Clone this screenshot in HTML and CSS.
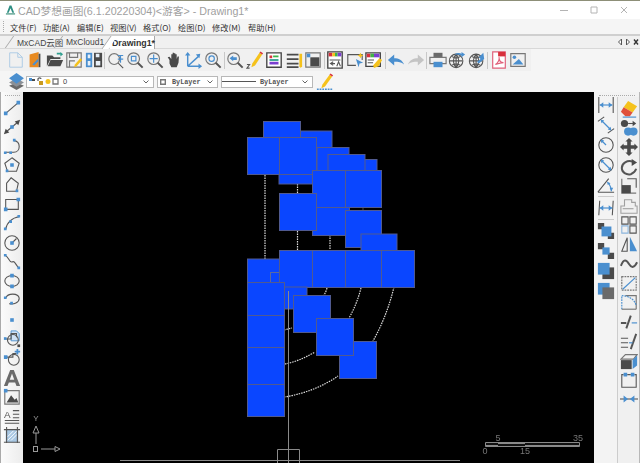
FILE: index.html
```html
<!DOCTYPE html>
<html lang="zh">
<head>
<meta charset="utf-8">
<title>CAD梦想画图</title>
<link rel="stylesheet" href="styles.css">
</head>
<body>
<div class="app">
  <header class="titlebar">
    <svg class="logo" viewBox="0 0 12 12"><path class="logo-a" d="M2 9 L5 1 H7 L10 9 H8 L6 4 L4 9Z"/><path class="logo-b" d="M1 9.5 H11 V11 H1Z"/></svg>
    <span class="title">CAD梦想画图(6.1.20220304)&lt;游客&gt; - Drawing1*</span>
    <div class="winctl">
      <svg class="wc" viewBox="0 0 10 10"><path d="M1 5.5H9"/></svg>
      <svg class="wc" viewBox="0 0 10 10"><path d="M2 2H8V8H2Z"/></svg>
      <svg class="wc" viewBox="0 0 10 10"><path d="M2 2L8 8M8 2L2 8"/></svg>
    </div>
  </header>
  <nav class="menubar">
    <span class="grip-v"></span>
    <span class="mi m1">文件(F)</span><span class="mi m2">功能(A)</span><span class="mi m3">编辑(E)</span><span class="mi m4">视图(V)</span><span class="mi m5">格式(O)</span><span class="mi m6">绘图(D)</span><span class="mi m7">修改(M)</span><span class="mi m8">帮助(H)</span>
  </nav>
  <div class="tabstrip">
    <span class="tab t1">MxCAD云图</span>
    <span class="tab t2">MxCloud1</span>
    <span class="tab t3">Drawing1*</span>
    <div class="tabctl">
      <svg class="tc" viewBox="0 0 6 8"><path class="s2" d="M4.500 1L1.500 4L4.500 7Z"/></svg>
      <svg class="tc" viewBox="0 0 6 8"><path class="s2" d="M1.500 1L4.500 4L1.500 7Z"/></svg>
      <svg class="tc" viewBox="0 0 6 8"><path class="sk" d="M1 1.500L5 6.500M5 1.500L1 6.500"/></svg>
    </div>
  </div>
  <div class="toolrow">
    <div class="toolbar">
      <svg class="ti" viewBox="0 0 20 20"><path class="sl" d="M3 2H12L17 7V18H3Z"/><path class="sl" d="M12 2V7H17"/></svg>
      <svg class="ti" viewBox="0 0 20 20"><path class="or" d="M4 4L14 1V18L4 18Z"/><path class="dk" d="M16 3V18H14V3Z"/><path class="bl" d="M7 15L13 9L14 11L9 16Z"/></svg>
      <svg class="ti" viewBox="0 0 20 20"><path class="dk" d="M1 5H7L9 7H16V9H5L1 17Z"/><path class="dk" d="M5 10H19L16 17H2Z"/><path class="te" d="M12 2H16V1L19 3.500L16 6V4H12Z"/></svg>
      <svg class="ti" viewBox="0 0 20 20"><path class="sg" d="M2 2H18V18H2Z"/><path class="sg" d="M5 2V7H14V2M5 18V11H11"/><path class="ye" d="M11 15L17 8L19 10L13 17L10 18Z"/></svg>
      <svg class="ti" viewBox="0 0 20 20"><path class="bl" d="M1 2H8V18H1Z"/><path class="dk" d="M10 2H19V18H10Z"/><path class="wh" d="M3 4H6V8H3ZM12 11H17V16H12ZM3 11H6V16H3ZM12 3H16V7H12Z"/></svg>
      <i class="sep"></i>
      <svg class="ti" viewBox="0 0 20 20"><circle class="sg" cx="8" cy="9" r="6"/><path class="sd" d="M12.500 13.500L18 19"/><path class="bs" d="M12 5H18M12 9H18M15 5V13"/></svg>
      <svg class="ti" viewBox="0 0 20 20"><circle class="sg" cx="8.500" cy="8.500" r="6.500"/><path class="sd2" d="M13 13L18.500 18.500"/><path class="bs" d="M6 6H11V11H6Z"/></svg>
      <svg class="ti" viewBox="0 0 20 20"><circle class="sg" cx="8.500" cy="8.500" r="6.500"/><path class="sd2" d="M13 13L18.500 18.500"/><path class="bs" d="M8.500 4V13M4 8.500H13"/></svg>
      <svg class="ti" viewBox="0 0 20 20"><path class="dk" d="M5 10L3 7L5 6.500L7 9V3.500H8.500V8V2H10V8V2.500H11.500V8V3.500H13V9L14 6H15.500L15 13L13 18H7L5 14Z"/></svg>
      <svg class="ti" viewBox="0 0 20 20"><path class="bs2" d="M3 17V3M3 17H17M3 17L15 6"/><path class="bl" d="M3 1L6 5H0ZM19 17L15 20V14ZM17 3L16 8L12 4Z"/></svg>
      <svg class="ti" viewBox="0 0 20 20"><circle class="sg" cx="8.500" cy="8.500" r="6.500"/><path class="sd2" d="M13 13L18.500 18.500"/><circle class="bs" cx="8.500" cy="8.500" r="3"/></svg>
      <i class="sep"></i>
      <svg class="ti" viewBox="0 0 20 20"><circle class="sg" cx="8.500" cy="8.500" r="6.500"/><path class="sd2" d="M13 13L18.500 18.500"/><path class="bl" d="M4 8L8 5V7H12V10H8V11.500Z"/></svg>
      <svg class="ti" viewBox="0 0 20 20"><path class="ye" d="M7 14L15 2L18 4L10 16L6 18Z"/><path class="re" d="M15 2L16 0.500L19 2.500L18 4Z"/><path class="sd" d="M1 15H4L1 19H4"/></svg>
      <svg class="ti" viewBox="0 0 20 20"><path class="ws" d="M2 2H18V18H2Z"/><path class="re" d="M5 5H8V8H5Z"/><path class="gr" d="M9 5H15V7H9Z"/><path class="te" d="M5 9H15V11H5Z"/><path class="pu" d="M5 12H15V15H5Z"/></svg>
      <svg class="ti" viewBox="0 0 20 20"><path class="dk" d="M2 3H15V5H2ZM2 8H15V10H2ZM2 13H15V15H2ZM2 17H15V19H2Z"/><path class="ye" d="M16 3H19V17L17.500 19L16 17Z"/></svg>
      <svg class="ti" viewBox="0 0 20 20"><path class="sg" d="M2 2H18V18H2Z"/><path class="dk" d="M7 7H17V17H7Z"/><path class="bl" d="M3 3H7V7H3Z"/></svg>
      <i class="sep"></i>
      <svg class="ti" viewBox="0 0 20 20"><path class="ws" d="M2 1H18V19H2Z"/><path class="re" d="M3 2H7V6H3Z"/><path class="ye" d="M7 2H10V6H7Z"/><path class="gr" d="M10 2H13V6H10Z"/><path class="pu" d="M13 2H17V6H13Z"/><path class="sd" d="M4 10H16M10 14H5M8 12L5 14L8 16M12 17L14 12L16 17"/></svg>
      <svg class="ti" viewBox="0 0 20 20"><path class="sd" d="M11 16H2V4H18V10"/><path class="bl" d="M11 9L19 13L15 14L14 18Z"/><path class="ye" d="M16 2L17 4L19 5L17 6L16 8L15 6L13 5L15 4Z"/></svg>
      <svg class="ti" viewBox="0 0 20 20"><path class="ws" d="M1 2H17V17H1Z"/><path class="re" d="M2 3H6V7H2Z"/><path class="gr" d="M6 3H10V7H6Z"/><path class="pu" d="M10 3H16V7H10Z"/><path class="sd" d="M3 10H10M3 13H9"/><path class="ye" d="M9 16L16 8L19 10L15 17L10 19Z"/></svg>
      <i class="sep"></i>
      <svg class="ti" viewBox="0 0 20 20"><path class="bl" d="M8 4V8C13 8 17 10 19 15C16 12.500 13 12 8 12V16L1 10Z"/></svg>
      <svg class="ti" viewBox="0 0 20 20"><path class="lg" d="M12 4V8C7 8 3 10 1 15C4 12.500 7 12 12 12V16L19 10Z"/></svg>
      <i class="sep"></i>
      <svg class="ti" viewBox="0 0 20 20"><path class="dg" d="M5 2H15V7H5Z"/><path class="sg" d="M1 7H19V14H1Z"/><path class="bl" d="M5 12H15V18H5Z"/></svg>
      <svg class="ti" viewBox="0 0 20 20"><circle class="sd" cx="9" cy="11" r="7.500"/><path class="sd" d="M2 11H16M9 3.500V18.500M4 6C7 8 11 8 14 6M4 16C7 14 11 14 14 16M9 3.500C5 8 5 14 9 18.500M9 3.500C13 8 13 14 9 18.500"/><path class="bl" d="M7 4C10 2 13 2 15 3V1L19 4L15 7V5C12 4 10 4 7 4Z"/></svg>
      <svg class="ti" viewBox="0 0 20 20"><circle class="sd" cx="9" cy="11" r="7.500"/><path class="sd" d="M2 11H16M9 3.500V18.500M4 6C7 8 11 8 14 6M4 16C7 14 11 14 14 16M9 3.500C5 8 5 14 9 18.500M9 3.500C13 8 13 14 9 18.500"/><path class="bl" d="M17 2L18 9L12 14L10 12L14 9L12 7Z"/></svg>
      <i class="sep"></i>
      <svg class="ti" viewBox="0 0 20 20"><path class="pk" d="M3 1H17V19H3Z"/><path class="re" d="M9 1H17V6H9Z"/><path class="pk" d="M6 15C9 13 11 9 10 7C10 11 12 13 15 13C12 13 9 14 6 15Z"/></svg>
      <svg class="ti" viewBox="0 0 20 20"><path class="sg" d="M2 3H18V17H2Z"/><path class="bl" d="M4 15L11 9L16 15Z"/><circle class="bl" cx="6" cy="7" r="2"/></svg>
    </div>
  </div>
  <div class="propbar">
    <svg class="layers" viewBox="0 0 16 16"><path class="dg" d="M8 9L15 12L8 16L1 12Z"/><path class="sla" d="M8 5L15 9L8 13L1 9Z"/><path class="bl" d="M8 0L15 5L8 10L1 5Z"/></svg>
    <div class="combo c-layer">
      <svg class="lic" viewBox="0 0 32 9"><path class="bl" d="M0 1H3V4H0Z"/><path class="dk" d="M3 2H6V4H3Z"/><path class="lock" d="M10 4H14V8H10Z"/><path class="sd" d="M9 4V2C9 0.500 12 0.500 12 2"/><circle class="ye" cx="19" cy="4.500" r="2.500"/><path class="sg" d="M24 2H29V7H24Z"/></svg>
      <span class="zero">0</span>
      <svg class="chev" viewBox="0 0 6 4"><path d="M0.500 0.500L3 3L5.500 0.500"/></svg>
    </div>
    <div class="combo c-color">
      <svg class="csq" viewBox="0 0 5 5"><path class="sg" d="M0.500 0.500H4.500V4.500H0.500Z"/></svg>
      <span class="bylayer">ByLayer</span>
      <svg class="chev" viewBox="0 0 6 4"><path d="M0.500 0.500L3 3L5.500 0.500"/></svg>
    </div>
    <div class="combo c-line">
      <i class="ltline"></i>
      <span class="bylayer">ByLayer</span>
      <svg class="chev" viewBox="0 0 6 4"><path d="M0.500 0.500L3 3L5.500 0.500"/></svg>
    </div>
    <svg class="pencil" viewBox="0 0 20 20"><path class="ye" d="M7 13L15 2L18 4L10 15L6 17Z"/><path class="re" d="M15 2L16 0.500L19 2.500L18 4Z"/><path class="dots" d="M1 18H19"/></svg>
  </div>
  <div class="workspace">
    <aside class="leftbar">
      <i class="grip-h"></i>
      <svg class="vi" viewBox="0 0 20 20"><path class="sd" d="M3 16L17 4"/><path class="bl" d="M1 14H5V18H1ZM15 2H19V6H15Z"/></svg>
      <svg class="vi" viewBox="0 0 20 20"><path class="sd" d="M4 15L16 5"/><path class="dk" d="M1 18L3 12L7 16ZM19 2L17 8L13 4Z"/><path class="bl" d="M8 8H12V12H8Z"/></svg>
      <svg class="vi" viewBox="0 0 20 20"><path class="sd" d="M3 17H12C20 17 20 4 12 4"/><path class="bl" d="M1 16H4V19H1ZM11 2H14V5H11ZM7 16H10V19H7Z"/></svg>
      <svg class="vi" viewBox="0 0 20 20"><path class="sd" d="M10 2L18 8L15 17H5L2 8Z"/><path class="bl" d="M8 8H12V12H8ZM3 15H6V18H3Z"/></svg>
      <svg class="vi" viewBox="0 0 20 20"><path class="sd" d="M9 2L17 8L15 17H4V8Z"/><path class="bl" d="M14 15H17V18H14Z"/></svg>
      <svg class="vi" viewBox="0 0 20 20"><path class="sd" d="M3 5H17V16H3Z"/><path class="bl" d="M1 14H5V18H1ZM15 3H19V7H15Z"/></svg>
      <svg class="vi" viewBox="0 0 20 20"><path class="sd" d="M3 17C4 10 10 4 18 3"/><path class="bl" d="M1 15H4V18H1ZM7 7H10V10H7ZM16 1H19V4H16Z"/></svg>
      <svg class="vi" viewBox="0 0 20 20"><circle class="sd" cx="10" cy="10" r="8"/><path class="sd" d="M10 10L15 5"/><path class="bl" d="M8 8H12V12H8Z"/></svg>
      <svg class="vi" viewBox="0 0 20 20"><path class="sd" d="M3 3C6 4 7 11 10 10C13 8 14 13 17 16"/><path class="bl" d="M1 1H4V4H1ZM16 15H19V18H16Z"/></svg>
      <svg class="vi" viewBox="0 0 20 20"><ellipse class="sd" cx="10" cy="10" rx="8" ry="6"/><path class="bl" d="M8 2H12V6H8ZM8 14H12V18H8Z"/></svg>
      <svg class="vi" viewBox="0 0 20 20"><path class="sd" d="M3 8C5 2 17 2 18 8C18 13 12 15 7 14"/><path class="bl" d="M1 6H4V9H1ZM8 12H11V15H8Z"/></svg>
      <svg class="vi" viewBox="0 0 20 20"><path class="bl" d="M8 8H12V12H8Z"/></svg>
      <svg class="vi" viewBox="0 0 20 20"><path class="wb" d="M9 1H15L18 4V12H9Z"/><circle class="sd" cx="11" cy="11" r="6"/><path class="sd" d="M3 10H9V4H15V8"/><path class="bl" d="M1 8H4V11H1Z"/><path class="dk" d="M16 16L19 16L19 19L16 19Z"/></svg>
      <svg class="vi" viewBox="0 0 20 20"><circle class="sd" cx="12" cy="12" r="6"/><path class="sd" d="M4 9H11V5H15"/><path class="bl" d="M1 7H5V11H1ZM15 0H17V2H19V4H17V6H15V4H13V2H15Z"/></svg>
      <svg class="vi" viewBox="0 0 20 20"><path class="dg" d="M8 1H12L19 19H15L13.500 15H6.500L5 19H1ZM10 5L7.500 12H12.500Z"/></svg>
      <svg class="vi" viewBox="0 0 20 20"><path class="sg" d="M2 3H18V18H2Z"/><path class="dk" d="M4 16L9 8L13 13L15 11L17 16Z"/><path class="bl" d="M1 1H5V5H1Z"/></svg>
      <svg class="vi" viewBox="0 0 20 20"><path class="sd" d="M11 4H18M11 8H18M11 12H18M2 15H18M2 18H18"/><text class="atext" x="1" y="12">A</text></svg>
      <svg class="vi" viewBox="0 0 20 20"><path class="hatch" d="M3 4H17V18H3Z"/><path class="sl2" d="M5 16L16 5M5 12L12 5M9 16L16 9"/><path class="sd" d="M1 4H19M1 18H19M4 1V19M16 1V19"/></svg>
    </aside>
    <main class="canvas">
      <svg class="drawing" viewBox="23 92 571 371">
        <g class="dotted">
          <path d="M265 175V259"/>
          <path d="M297.500 184V193M297.500 231V250"/>
          <path d="M330 235V250"/>
          <path class="dimdot" d="M363 207V210"/>
          <path d="M327 288Q326 292 324 295"/>
          <path d="M361 288Q357 304 349 318"/>
          <path d="M394 287Q387 316 373 341"/>
          <path d="M284 330L292 328"/>
          <path d="M285 364Q300 361 315 352"/>
          <path d="M284 397Q315 392 338 376"/>
        </g>
        <g class="blocks">
          <rect x="295" y="131" width="37" height="37"/>
          <rect x="263.500" y="121.500" width="37" height="37"/>
          <rect x="317" y="147.500" width="32" height="37"/>
          <rect x="340" y="159.500" width="37" height="37"/>
          <rect x="328" y="154.500" width="37" height="37"/>
          <rect x="279" y="147" width="37" height="37"/>
          <rect x="247.500" y="137.500" width="37" height="37"/>
          <rect x="279.500" y="137.500" width="37" height="37"/>
          <rect x="312.500" y="198.500" width="37" height="37"/>
          <rect x="312.500" y="170.500" width="33" height="37"/>
          <rect x="345.500" y="170.500" width="36" height="37"/>
          <rect x="279.500" y="193.500" width="37" height="37"/>
          <rect x="345.500" y="210.500" width="36" height="37"/>
          <rect x="361" y="234" width="36" height="37"/>
          <rect x="247.500" y="259" width="37" height="37"/>
          <rect class="outline" x="270.500" y="272.500" width="9" height="10"/>
          <rect x="279.500" y="250.500" width="33" height="37"/>
          <rect x="312.500" y="250.500" width="33" height="37"/>
          <rect x="345.500" y="250.500" width="36" height="37"/>
          <rect x="381.500" y="250.500" width="33" height="37"/>
          <rect x="270" y="287" width="37" height="22"/>
          <rect x="293.500" y="295.500" width="37" height="37"/>
          <rect x="339.500" y="341.500" width="37" height="37"/>
          <rect x="316.500" y="318.500" width="37" height="37"/>
          <rect x="247.500" y="282.500" width="37" height="33"/>
          <rect x="247.500" y="315.500" width="37" height="32"/>
          <rect x="247.500" y="347.500" width="37" height="37"/>
          <rect x="247.500" y="384.500" width="37" height="32"/>
        </g>
        <g class="axis">
          <path d="M288.500 291V463"/>
          <path d="M277.500 463V449.500H299.500V463"/>
          <path d="M120 460.500H460"/>
        </g>
        <g class="ucs">
          <path d="M36 444V433M41 449H55"/>
          <path d="M36 426L39 433H33ZM60 449L55 446.500V451.500Z"/>
          <rect x="33.500" y="446.500" width="4" height="5"/>
          <text x="36" y="421">Y</text>
        </g>
        <g class="scale">
          <path class="sb-out" d="M485.500 442.500H579.500V446.500H485.500Z"/>
          <path class="sb-fill" d="M485 445H498V446H485ZM498 442H525V444H498ZM525 445H579V446H525Z"/>
          <text x="498" y="441">5</text>
          <text x="578" y="441">35</text>
          <text x="485" y="454">0</text>
          <text x="525" y="454">15</text>
        </g>
      </svg>
    </main>
    <aside class="rightbars">
      <i class="grip-h grip-r"></i>
      <div class="rcols">
        <div class="rcol rcol1">
          <svg class="ri" viewBox="0 0 20 20"><path class="sd" d="M2 1V19M18 1V19"/><path class="bs" d="M3 10H17"/><path class="bl" d="M3 10L7 7V13ZM17 10L13 7V13Z"/></svg>
          <svg class="ri" viewBox="0 0 20 20"><path class="sd" d="M1 6L8 1M12 19L19 14"/><path class="bs" d="M5 5L15 15"/><path class="bl" d="M4 4L8 5L5 8ZM16 16L12 15L15 12Z"/></svg>
          <svg class="ri" viewBox="0 0 20 20"><circle class="sd" cx="10" cy="10" r="8"/><path class="bs" d="M10 10L5 5"/><path class="bl" d="M4 4L8 5L5 8Z"/></svg>
          <svg class="ri" viewBox="0 0 20 20"><circle class="sd" cx="10" cy="10" r="8"/><path class="bs" d="M5 5L15 15"/><path class="bl" d="M4 4L8 5L5 8ZM16 16L12 15L15 12Z"/></svg>
          <svg class="ri" viewBox="0 0 20 20"><path class="sd" d="M1 18H19M1 18L13 3"/><path class="bs" d="M13 8C15 11 16 13 16 17"/><path class="bl" d="M11 6L15 8L12 10ZM16 17L14 13L18 13Z"/></svg>
          <i class="hsep"></i>
          <svg class="ri" viewBox="0 0 20 20"><path class="sd" d="M3 2L2 18M18 2L17 18"/><path class="bs" d="M3 10H17"/><path class="bl" d="M3 10L7 7V13ZM17 10L13 7V13Z"/></svg>
          <i class="hsep"></i>
          <svg class="ri" viewBox="0 0 20 20"><path class="dk" d="M1 1H8V8H1ZM12 12H19V19H12Z"/><path class="bl" d="M5 5H16V16H5Z"/></svg>
          <svg class="ri" viewBox="0 0 20 20"><path class="dk" d="M1 1H8V8H1ZM12 12H19V19H12Z"/><path class="bl" d="M6 6H14V14H6Z"/></svg>
          <svg class="ri" viewBox="0 0 20 20"><path class="dk" d="M6 6H19V19H6Z"/><path class="bl" d="M1 1H14V14H1Z"/></svg>
          <svg class="ri" viewBox="0 0 20 20"><path class="bl" d="M1 1H14V14H1Z"/><path class="dg" d="M6 6H19V19H6Z"/></svg>
        </div>
        <div class="rcol rcol2">
          <svg class="ri" viewBox="0 0 20 20"><path class="ye" d="M9 1L19 7L14 14L4 8Z"/><path class="er" d="M4 8L14 14L11 18H6L1 13Z"/><path class="bs" d="M3 19H18"/></svg>
          <svg class="ri" viewBox="0 0 20 20"><circle class="dk" cx="5" cy="5" r="4"/><path class="sd" d="M9 5H15"/><path class="dk" d="M18 5L14 2V8Z"/><circle class="bl" cx="9" cy="14" r="4.500"/><circle class="bl" cx="15" cy="14" r="4.500"/></svg>
          <svg class="ri" viewBox="0 0 20 20"><path class="dk" d="M10 0L14 4H12V8H16V6L20 10L16 14V12H12V16H14L10 20L6 16H8V12H4V14L0 10L4 6V8H8V4H6Z"/></svg>
          <svg class="ri" viewBox="0 0 20 20"><path class="sd2" d="M14 4C8 2 2 6 2 11C2 16 7 19 12 18C15 17 17 15 18 12"/><path class="dk" d="M13 1L19 5L13 9Z"/></svg>
          <svg class="ri" viewBox="0 0 20 20"><path class="sd" d="M8 2H18V12"/><path class="sg" d="M2 2V18H18"/><path class="dk" d="M2 9H12V18H2Z"/></svg>
          <svg class="ri" viewBox="0 0 20 20"><path class="sgl" d="M1 10H5V3H13V6H17V10H19V18H1Z"/><path class="sgl" d="M3 13H15"/></svg>
          <svg class="ri" viewBox="0 0 20 20"><path class="sd" d="M2 1H9V9H2ZM11 1H18V9H11ZM11 11H18V19H11Z"/><path class="bsk" d="M2 11H9V19H2Z"/></svg>
          <svg class="ri" viewBox="0 0 20 20"><path class="sd" d="M8 3V18H2Z"/><path class="bl" d="M11 2L19 18H11Z"/></svg>
          <svg class="ri" viewBox="0 0 20 20"><path class="sd2" d="M1 12C4 4 7 5 10 10C13 15 16 14 19 8"/></svg>
          <svg class="ri" viewBox="0 0 20 20"><path class="sg da" d="M2 3H18V18H2Z"/><path class="bs" d="M3 17L17 4"/></svg>
          <svg class="ri" viewBox="0 0 20 20"><path class="sg" d="M6 3H18V18"/><path class="bs da" d="M2 18V3C8 3 16 6 18 14"/><path class="sg" d="M2 18H18"/></svg>
          <svg class="ri" viewBox="0 0 20 20"><path class="sd2" d="M1 11H7M7 17L12 3"/><path class="bs" d="M13 11H19"/></svg>
          <svg class="ri" viewBox="0 0 20 20"><path class="sd" d="M1 7H9M1 12H9M1 17H9"/><path class="sd2" d="M12 19L18 2"/><path class="bs" d="M10 12H14"/></svg>
          <svg class="ri" viewBox="0 0 20 20"><path class="sg" d="M1 8L6 3H19L15 8Z"/><path class="bl" d="M14 9L19 4V15L14 19Z"/><path class="dk" d="M1 9H13V19H1Z"/></svg>
          <svg class="ri" viewBox="0 0 20 20"><path class="sd" d="M4 4H2V18H18V4H16M8 4H12"/><path class="bl" d="M4 2H8V6H4ZM12 2H16V6H12Z"/></svg>
          <svg class="ri" viewBox="0 0 20 20"><path class="sd" d="M0 10H20"/><path class="bl" d="M9 10L4 6V14ZM11 10L16 6V14Z"/></svg>
        </div>
      </div>
    </aside>
  </div>
</div>
</body>
</html>
```
FILE: styles.css
```css
html, body { margin: 0; padding: 0; background: #f4f4f4; }
.app { width: 640px; height: 463px; display: flex; flex-direction: column; overflow: hidden; font-family: "Noto Sans CJK SC", "Liberation Sans", sans-serif; border-top: 1px solid #8d8f78; box-sizing: border-box; filter: blur(0.3px); }

/* title */
.titlebar { height: 18px; background: #fff; display: flex; align-items: center; padding-left: 5px; flex: none; }
.logo { width: 11px; height: 12px; flex: none; }
.logo-a { fill: #2f8f83; }
.logo-b { fill: #5aa08f; }
.title { margin-left: 2px; font-family: "Liberation Sans", "Noto Sans CJK SC", sans-serif; font-size: 10.7px; color: #a0a0a0; white-space: nowrap; }
.winctl { margin-left: auto; display: flex; gap: 20px; padding-right: 11px; }
.wc { width: 10px; height: 10px; fill: none; stroke: #b4b4b4; stroke-width: 1; }

/* menu */
.menubar { height: 15px; background: #f5f5f5; display: flex; align-items: center; flex: none; padding-left: 3px; }
.grip-v { width: 1px; height: 11px; border-left: 1px dotted #aaa; margin-right: 5px; }
.mi { font-size: 8.2px; color: #333; white-space: nowrap; line-height: 12px; }
.m1 { width: 33px; }
.m2 { width: 34px; }
.m3 { width: 33px; }
.m4 { width: 33px; }
.m5 { width: 35px; }
.m6 { width: 34px; }
.m7 { width: 36px; }

/* tabs */
.tabstrip { height: 15px; flex: none; background: #f0f0f0; border-top: 2px solid #cfcfcf; border-bottom: 1px solid #d8d8d8; box-sizing: border-box; display: flex; align-items: stretch; padding-left: 17px; font-family: "Liberation Sans", "Noto Sans CJK SC", sans-serif; font-size: 8.5px; color: #444; }
.tab { position: relative; display: flex; align-items: center; white-space: nowrap; }
.tab::before { content: ""; position: absolute; left: -8px; top: 0; bottom: 0; width: 6px; border-left: 1px solid #a8a8a8; transform: skewX(-35deg); }
.t1 { width: 49px; }
.t2 { width: 44px; }
.t3 { width: 45px; padding-left: 2px; background: #fff; font-weight: 700; font-size: 8.8px; color: #333; border-right: 1px solid #a8a8a8; box-sizing: border-box; margin-bottom: -1px; }
.t3::before { background: #fff; left: -4px; }
.tabctl { margin-left: auto; display: flex; align-items: center; gap: 2px; padding-right: 1px; }
.tc { width: 6px; height: 8px; }
.s2 { fill: #fff; stroke: #555; stroke-width: 1; }
.sk { fill: none; stroke: #333; stroke-width: 1.4; }

/* top toolbar */
.toolrow { height: 22px; flex: none; background: #f5f5f5; display: flex; }
.toolbar { width: 525px; padding-left: 6px; background: #f0f0f0; display: flex; align-items: center; }
.ti { width: 18px; height: 18px; margin: 0 0.750px; flex: none; }
.sep { width: 1px; height: 17px; margin: 0 0.750px; background: #c8c8c8; flex: none; }

/* layer row */
.propbar { height: 21px; flex: none; background: #f5f5f5; display: flex; align-items: center; padding-left: 8px; }
.layers { width: 17px; height: 17px; margin-right: 1px; flex: none; }
.combo { height: 12px; box-sizing: border-box; background: #fff; border: 1px solid #b8b8b8; display: flex; align-items: center; flex: none; }
.c-layer { width: 128px; margin-right: 3px; padding-left: 1px; }
.c-color { width: 61px; margin-right: 3px; padding-left: 2px; }
.c-line { width: 92px; padding-left: 0; }
.lic { width: 32px; height: 9px; flex: none; margin-left: 1px; }
.zero { margin-left: 2px; font-family: "Liberation Sans", sans-serif; font-size: 7.500px; color: #444; }
.csq { width: 6px; height: 6px; flex: none; }
.bylayer { font-family: "Liberation Mono", monospace; font-size: 6.8px; color: #555; font-weight: 700; margin-left: 6px; }
.c-line .bylayer { margin-left: 2px; }
.ltline { width: 34px; height: 1px; background: #555; flex: none; margin-right: 2px; }
.chev { width: 6px; height: 4px; margin-left: auto; margin-right: 4px; fill: none; stroke: #666; stroke-width: 1; flex: none; }
.pencil { width: 18px; height: 18px; margin-left: 3px; flex: none; }
.dots { fill: none; stroke: #4a90d0; stroke-width: 1.500; stroke-dasharray: 2 1; }

/* workspace */
.workspace { flex: 1; display: flex; min-height: 0; }
.leftbar { width: 23px; flex: none; box-sizing: border-box; border-left: 1px solid #aaa; background: linear-gradient(90deg, #fbfbfb, #ececec); display: flex; flex-direction: column; align-items: center; }
.grip-h { display: block; width: 15px; height: 1px; border-top: 1px dotted #aaa; margin: 3px 0 1px; flex: none; }
.vi { width: 18px; height: 18px; margin: 0.650px 0; flex: none; }
.canvas { flex: 1; background: #000; min-width: 0; }
.drawing { display: block; width: 571px; height: 371px; }
.dotted { fill: none; stroke: #ddd; stroke-width: 1.200; stroke-dasharray: 1.500 1; }
.dimdot { stroke: #777; }
.blocks rect { fill: #0a46ff; stroke: #505a90; stroke-width: 1; }
.blocks .outline { fill: none; stroke: #5a6aa0; }
.axis { fill: none; stroke: #8a8a8a; stroke-width: 1; }
.ucs { fill: none; stroke: #9a9a9a; stroke-width: 1; }
.ucs text { fill: #999; stroke: none; font-family: "Liberation Sans", sans-serif; font-size: 8px; text-anchor: middle; }
.scale text { fill: #777; font-family: "Liberation Sans", sans-serif; font-size: 9px; text-anchor: middle; }
.sb-out { fill: #111; stroke: #8a8a8a; stroke-width: 1; }
.sb-fill { fill: #8a8a8a; }

.rightbars { width: 46px; flex: none; background: #f3f3f3; box-sizing: border-box; border-right: 1px solid #b8b8b8; display: flex; flex-direction: column; align-items: center; }
.grip-r { width: 36px; margin-bottom: 0; }
.rcols { display: flex; flex: 1; min-height: 0; }
.rcol { display: flex; flex-direction: column; align-items: center; box-sizing: border-box; }
.rcol1 { width: 23px; padding-top: 0; }
.rcol1 .ri:first-child { margin-top: -1px; }
.rcol2 { width: 22px; border-left: 1px solid #ccc; padding-top: 2px; background: #f0f0f0; }
.ri { width: 18px; height: 18px; margin: 0.700px 0; flex: none; }
.rcol1 .ri { margin-bottom: 1px; margin-top: 1px; }
.hsep { display: block; width: 16px; height: 1px; background: #ccc; margin: 1px 0; flex: none; }

/* icon paint */
.sl { fill: none; stroke: #a9c8e4; stroke-width: 1; }
.sl2 { fill: none; stroke: #fff; stroke-width: 1; }
.or { fill: #e88a20; }
.dk { fill: #4a4a4a; }
.bl { fill: #4a8fcf; }
.te { fill: #2f9f8f; }
.sg { fill: none; stroke: #777; stroke-width: 1.300; }
.ye { fill: #f5c21c; }
.wh { fill: #e8f0f8; }
.sd { fill: none; stroke: #555; stroke-width: 1.200; }
.sd2 { fill: none; stroke: #555; stroke-width: 2.200; }
.bs { fill: none; stroke: #4a8fcf; stroke-width: 1.300; }
.bs2 { fill: none; stroke: #4a8fcf; stroke-width: 1.600; }
.re { fill: #d8303c; }
.ws { fill: #fff; stroke: #444; stroke-width: 1.500; }
.gr { fill: #3fb34a; }
.pu { fill: #7a3fd0; }
.lg { fill: #c4c4c4; }
.dg { fill: #6a6a6a; }
.pk { fill: #fff; stroke: #e0607a; stroke-width: 1.300; }
.sla { fill: #8a8f96; }
.lock { fill: #c99a20; }
.wb { fill: #cfe2f5; stroke: #4a8fcf; }
.hatch { fill: #a9c8e4; }
.atext { font-family: "Liberation Sans", sans-serif; font-size: 11px; fill: #555; }
.er { fill: #e0503a; }
.sgl { fill: none; stroke: #a0a0a0; stroke-width: 1.200; }
.bsk { fill: none; stroke: #8ab4dc; stroke-width: 1.200; }
.da { stroke-dasharray: 2 1; }
```
